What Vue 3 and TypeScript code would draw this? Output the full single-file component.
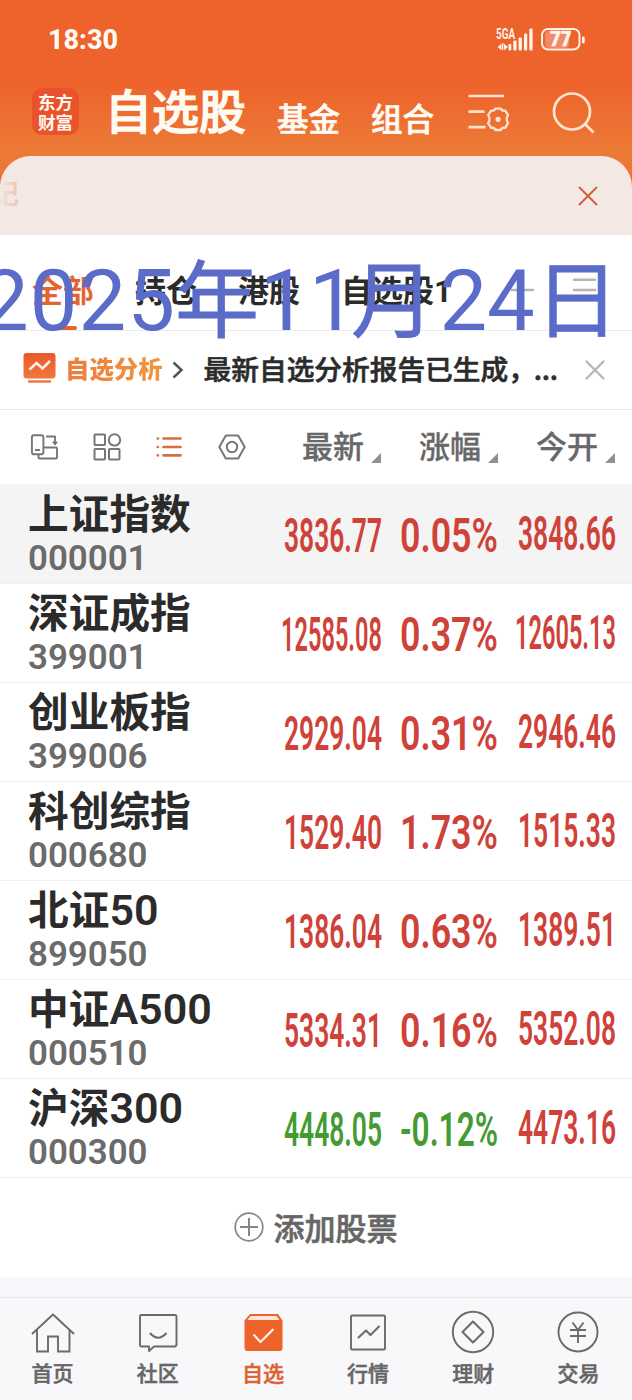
<script setup lang="ts">
import { h } from 'vue'

interface Quote {
  name: string
  latin: string
  code: string
  last: string
  change: string
  open: string
  down?: boolean
}

const quotes: Quote[] = [
  { name: '上证指数', latin: '', code: '000001', last: '3836.77', change: '0.05%', open: '3848.66' },
  { name: '深证成指', latin: '', code: '399001', last: '12585.08', change: '0.37%', open: '12605.13' },
  { name: '创业板指', latin: '', code: '399006', last: '2929.04', change: '0.31%', open: '2946.46' },
  { name: '科创综指', latin: '', code: '000680', last: '1529.40', change: '1.73%', open: '1515.33' },
  { name: '北证', latin: '50', code: '899050', last: '1386.04', change: '0.63%', open: '1389.51' },
  { name: '中证', latin: 'A500', code: '000510', last: '5334.31', change: '0.16%', open: '5352.08' },
  { name: '沪深', latin: '300', code: '000300', last: '4448.05', change: '-0.12%', open: '4473.16', down: true },
]

const tabs = ['全部', '持仓', '港股', '自选股1']
const columns = ['最新', '涨幅', '今开']
const nav = ['首页', '社区', '自选', '行情', '理财', '交易']

// Right-aligned figure condensed to a fixed width, so long prices keep their height.
const Figure = (p: { value: string; width: number; size: number }) =>
  h('svg', { width: p.width, height: p.size, class: 'figure' }, [
    h(
      'text',
      {
        x: 0,
        y: p.size * 0.855,
        'font-size': p.size,
        textLength: p.width,
        lengthAdjust: 'spacingAndGlyphs',
        fill: 'currentColor',
      },
      p.value,
    ),
  ])
Figure.props = ['value', 'width', 'size']

const priceWidth = (v: string) => (v.length > 7 ? 101 : 98)
</script>

<template>
  <div class="screen">
    <header class="top">
      <div class="status">
        <Figure class="clock" value="18:30" :width="70" :size="27" />
        <svg class="signal" width="96" height="30" viewBox="0 0 96 30">
          <text x="1" y="14" font-size="15.500" font-weight="700" textLength="19" lengthAdjust="spacingAndGlyphs" fill="#fff3ea">5GA</text>
          <path d="M2.500 21.500l4-3.200v6.400zM13 21.500l-4-3.200v6.400z" fill="#fff3ea" transform="translate(0 .5)" />
          <path d="M7.700 18v7" stroke="#fff3ea" stroke-width="1.300" />
          <g fill="#fff3ea">
            <rect x="13.500" y="19" width="2.800" height="6.500" rx="1" />
            <rect x="18.300" y="15.500" width="3.300" height="10" rx="1" />
            <rect x="23.600" y="12.500" width="3.300" height="13" rx="1" />
            <rect x="29" y="8.500" width="3.200" height="17" rx="1" />
            <rect x="34.300" y="3.500" width="3.300" height="22" rx="1" />
          </g>
          <rect x="50" y="6" width="24" height="17" rx="4" fill="#f08a68" />
          <rect x="47" y="4" width="37.500" height="20.500" rx="6" fill="none" stroke="#fff0e6" stroke-width="2" />
          <rect x="87" y="11.500" width="2.700" height="7" rx="1.300" fill="#fff0e6" />
          <text x="55" y="21.300" font-size="20" font-weight="900" textLength="21.500" lengthAdjust="spacingAndGlyphs" fill="#fff6ef" stroke="#fff6ef" stroke-width=".5">77</text>
        </svg>
      </div>
      <div class="titlebar">
        <div class="logo"><span>东方</span><span>财富</span></div>
        <h1>自选股</h1>
        <span class="link">基金</span>
        <span class="link second">组合</span>
        <svg class="manage" width="44" height="40" viewBox="0 0 44 40" fill="none" stroke="#ffe3cf" stroke-width="2.700">
          <path d="M1.500 4H37M1.500 19.600H17.500M1.500 35.200H18.500" />
          <path d="M24.200 18.600C26.500 19 28 18 28.200 16.600H34C34.500 18.200 36 19 38.200 18.600L41.100 23.100C39.300 25.200 39.300 29 41.100 31.200L38.200 35.900C36 35.400 34.500 36.300 34 38H28.200C27.700 36.300 26.200 35.400 24.200 35.900L21.100 31.200C23 29 23 25.200 21.100 23.100Z" stroke-width="2.300" stroke-linejoin="round" />
          <circle cx="31.100" cy="27.300" r="2.600" fill="#ffe3cf" stroke="none" />
        </svg>
        <svg class="search" width="44" height="44" viewBox="0 0 44 44" fill="none" stroke="#ffe3cf" stroke-width="2.700">
          <circle cx="20" cy="19.500" r="18" />
          <path d="M32.500 31.500l9 9" />
        </svg>
      </div>
    </header>

    <section class="notice">
      <span class="ticker">记</span>
      <svg width="20" height="20" viewBox="0 0 20 20" stroke="#cf6136" stroke-width="1.900" stroke-linecap="round"><path d="M1.500 1.500l17 17M18.500 1.500l-17 17" /></svg>
    </section>

    <section class="tabs">
      <span v-for="(t, i) in tabs" :key="t" class="tab" :class="{ active: i === 0 }">{{ t }}</span>
      <svg class="tools" width="90" height="24" viewBox="0 0 90 24" stroke="#b4b4b8" stroke-width="2.600" stroke-linecap="round">
        <path d="M1 13H22M63 2.800H84M63 13H84" />
      </svg>
      <svg class="datemark" width="632" height="90" viewBox="0 0 632 90">
        <text y="75">
          <tspan x="-19" textLength="194">2025</tspan><tspan class="han" x="175" y="76">年</tspan><tspan x="260 309" y="75">11</tspan><tspan class="han" x="351" y="76">月</tspan><tspan x="439.500 487" y="75">24</tspan><tspan class="han" x="535" y="76">日</tspan>
        </text>
      </svg>
    </section>

    <section class="analysis">
      <svg class="chart" width="33" height="31" viewBox="0 0 33 31">
        <defs>
          <linearGradient id="chartFill" x1="0" y1="0" x2="0" y2="1"><stop offset="0" stop-color="#ea572b" /><stop offset="1" stop-color="#f0793d" /></linearGradient>
        </defs>
        <rect x=".5" y="0" width="32" height="25.500" rx="3" fill="url(#chartFill)" />
        <path d="M6.500 16.500l7-6.500 6 5.500 7.500-7.500" fill="none" stroke="#fff0e4" stroke-width="2.500" />
        <path d="M6 28.500h21" stroke="#ec7a45" stroke-width="2.500" stroke-linecap="round" />
      </svg>
      <b>自选分析</b>
      <svg class="chevron" width="12" height="18" viewBox="0 0 12 18" fill="none" stroke="#555" stroke-width="2.500"><path d="M1.500 1.500L9.500 9l-8 7.500" /></svg>
      <p>最新自选分析报告已生成，<i>...</i></p>
      <svg class="dismiss" width="20" height="20" viewBox="0 0 20 20" stroke="#b7b7b7" stroke-width="2.400" stroke-linecap="round"><path d="M1.500 1.500l17 17M18.500 1.500l-17 17" /></svg>
    </section>

    <section class="colhead">
      <div class="views">
        <svg width="28" height="28" viewBox="0 0 28 28" fill="none" stroke="#777" stroke-width="1.900" stroke-linejoin="round">
          <rect x="1.900" y="2.300" width="11.500" height="19" rx="2" />
          <path d="M5 17h5M8.500 21.500V24.500q0 1 1 1H26q1 0 1-1V15.500q0-1-1-1H13.500M16 3.500H25V11" />
          <path d="M22.700 9l2.300 3 2.300-3z" fill="#777" stroke-width="1" />
        </svg>
        <svg width="28" height="28" viewBox="0 0 28 28" fill="none" stroke="#777" stroke-width="2">
          <rect x="1.500" y="1.500" width="10.500" height="10.500" rx=".7" /><circle cx="21.500" cy="6.900" r="5.700" />
          <rect x="1.500" y="16" width="10.500" height="10.500" rx=".7" /><rect x="16" y="16" width="10.500" height="10.500" rx=".7" />
        </svg>
        <svg width="28" height="28" viewBox="0 0 28 28" stroke="#dc6b40" stroke-width="2.700" stroke-linecap="round">
          <path d="M2.800 5.500h.1M2.800 14h.1M2.800 22.300h.1M8.500 5.500H25.500M8.500 14H25.500M8.500 22.300H25.500" />
        </svg>
        <svg width="28" height="28" viewBox="0 0 28 28" fill="none" stroke="#777" stroke-width="2">
          <path d="M7.800 2.400h12.400L26.700 14l-6.500 11.600H7.800L1.300 14z" stroke-linejoin="round" /><circle cx="14" cy="14" r="5.200" />
        </svg>
      </div>
      <div v-for="c in columns" :key="c" class="col">
        <span>{{ c }}</span>
        <svg width="10" height="10" viewBox="0 0 10 10"><path d="M10 0v10H0z" fill="#909090" /></svg>
      </div>
    </section>

    <main>
      <article v-for="(q, i) in quotes" :key="q.code" class="row" :class="{ pinned: i === 0 }">
        <div class="ident">
          <h2>{{ q.name }}<em v-if="q.latin">{{ q.latin }}</em></h2>
          <Figure class="code" :value="q.code" :width="119.500" :size="35.500" />
        </div>
        <div class="num" :class="{ down: q.down }"><Figure :value="q.last" :width="priceWidth(q.last)" :size="47.500" /></div>
        <div class="num" :class="{ down: q.down }"><Figure :value="q.change" :width="98" :size="47.500" /></div>
        <div class="num open"><Figure :value="q.open" :width="priceWidth(q.open)" :size="47.500" /></div>
      </article>
    </main>

    <div class="add">
      <svg width="30" height="30" viewBox="0 0 30 30" fill="none" stroke="#858585" stroke-width="1.700"><circle cx="15" cy="15" r="13.800" /><path d="M6 15h18M15 6v18" stroke-width="2" /></svg>
      <span>添加股票</span>
    </div>
    <div class="spacer"></div>

    <nav>
      <div v-for="(n, i) in nav" :key="n" class="item" :class="{ on: i === 2 }">
        <svg width="44" height="44" viewBox="0 0 44 44" fill="none" stroke="#6b6b6b" stroke-width="1.900" stroke-linejoin="round">
          <template v-if="i === 0">
            <path d="M1 23L22 3.500 43 23" />
            <path d="M6 19V40.500H17V25.500H27V40.500H38.500V19" stroke-linejoin="miter" />
          </template>
          <template v-else-if="i === 1">
            <path d="M5 4H39Q40.500 4 40.500 6V33Q40.500 35.500 38.500 35.500H18L13 40V35.500H5.500Q4 35.500 4 33.500V5.500Q4 4 5 4Z" />
            <path d="M14 22Q22 31.500 30.500 22" stroke-width="2.100" />
          </template>
          <template v-else-if="i === 2">
            <path d="M9 3H37L41.500 9.500V37Q41.500 40 38.500 40H6.500Q3.500 40 3.500 37V9.500Z" fill="#ee632a" stroke="none" />
            <path d="M9.500 5H35.500L38.500 9H6.500Z" fill="#fce5da" stroke="none" />
            <path d="M12.500 23.500L19.500 31 32.500 18" stroke="#fff0e8" stroke-width="2.200" />
          </template>
          <template v-else-if="i === 3">
            <rect x="5" y="4.500" width="34" height="34" rx="1" />
            <path d="M12 27L20 19.500 24.500 24 33.500 15" stroke-width="2.100" />
          </template>
          <template v-else-if="i === 4">
            <circle cx="22" cy="21" r="20.200" />
            <path d="M22 10.500L32.500 21 22 31.500 11.500 21Z" stroke-width="2.100" />
          </template>
          <template v-else>
            <circle cx="22" cy="21" r="19.500" />
            <path d="M16.500 11.500L22 19 27.500 11.500M22 19V32M14 19H30M14 25H30" />
          </template>
        </svg>
        <span>{{ n }}</span>
      </div>
    </nav>
  </div>
</template>

<style>
body {
  background: #fff;
}
</style>

<style scoped>
.screen {
  width: 632px;
  height: 1400px;
  overflow: hidden;
  display: flex;
  flex-direction: column;
  background: linear-gradient(#ee622b 0, #ee622b 78px, #ec7936 150px, #ec7534 200px, #fff 201px);
  font-family: 'Noto Sans CJK SC', sans-serif;
  line-height: 1;
  color: #2b2b2b;
}
svg { display: block; flex: none; overflow: visible; }
.figure, .signal { font-family: Roboto, sans-serif; font-weight: 600; }
span, b, p, h1, h2 { white-space: nowrap; }
.top { height: 156px; flex: none; color: #fffaf2; }
.status { display: flex; justify-content: space-between; padding: 26px 41px 0 48px; height: 54px; box-sizing: border-box; }
.clock { font-weight: 800; }
.signal { margin-top: -1px; }
.titlebar { display: flex; height: 102px; padding-left: 32px; }
.logo {
  width: 47px;
  height: 47px;
  margin-top: 34px;
  border-radius: 10px;
  background: #ea522b;
  display: flex;
  flex-direction: column;
  align-items: center;
  justify-content: center;
  font-size: 17.500px;
  font-weight: 700;
  line-height: 20px;
}
h1 { margin: 31px 0 0 26px; font-size: 47px; font-weight: 500; line-height: 48px; -webkit-text-stroke: 1.200px currentColor; }
.link { margin: 46px 0 0 31px; font-size: 31.500px; font-weight: 500; line-height: 34px; -webkit-text-stroke: .7px currentColor; }
.second { margin-left: 31px; }
.manage { margin: 38px 0 0 33px; }
.search { margin: 38px 0 0 41px; }
.notice {
  height: 79px;
  flex: none;
  box-sizing: border-box;
  border-radius: 31px 31px 0 0;
  background: #f3e8e3;
  display: flex;
  justify-content: space-between;
  align-items: center;
  padding: 0 34px 0 0;
}
.ticker {
  margin: -6px 0 0 -8px;
  font-size: 27px;
  font-weight: 700;
  line-height: 34px;
  background: linear-gradient(90deg, #f1e2da 35%, #ecc4ae 100%);
  background-clip: text;
  color: transparent;
}
.notice svg { margin-top: 1px; }
.tabs {
  position: relative;
  height: 96px;
  flex: none;
  box-sizing: border-box;
  border-bottom: 1px solid #ebebee;
  background: #fff;
  display: flex;
  gap: 41px;
  padding: 41px 0 0 32px;
}
.tab { position: relative; font-size: 31px; font-weight: 700; line-height: 31px; font-family: Roboto, 'Noto Sans CJK SC', sans-serif; }
.active { color: #e4642f; }
.active::after {
  content: '';
  position: absolute;
  left: 21px;
  top: 50px;
  width: 24px;
  height: 4px;
  border-radius: 2px;
  background: #e4642f;
}
.tools { margin-left: 18px; margin-top: 1px; }
.datemark { position: absolute; left: 0; top: 20px; z-index: 2; }
.datemark text { font-family: Roboto, sans-serif; font-size: 85px; fill: #5a6bc8; }
.datemark .han { font-family: 'Noto Sans CJK SC', sans-serif; font-size: 84px; stroke: #5a6bc8; stroke-width: .8px; }
.analysis {
  height: 79px;
  flex: none;
  box-sizing: border-box;
  border-bottom: 1px solid #ebebeb;
  background: #fff;
  display: flex;
  align-items: center;
  padding-left: 23px;
}
.chart { margin-top: -4px; }
.analysis b {
  margin: -5px 0 0 9px;
  font-size: 24.400px;
  font-weight: 900;
  line-height: 32px;
  background: linear-gradient(90deg, #ee7c3e, #ef963e);
  background-clip: text;
  color: transparent;
}
.chevron { margin-left: 9px; }
.analysis p {
  margin: -3px 0 0 20px;
  width: 354px;
  font-size: 27.700px;
  font-weight: 500;
  display: flex;
  -webkit-text-stroke: .6px currentColor;
}
.analysis i { font-style: normal; margin-left: -2px; letter-spacing: -.3px; }
.dismiss { margin-left: 27px; }
.colhead { height: 74px; flex: none; background: #fff; display: flex; align-items: center; }
.views { display: flex; gap: 34.500px; padding-left: 30px; width: 302px; box-sizing: border-box; flex: none; }
.col {
  width: 117px;
  flex: none;
  display: flex;
  align-items: center;
  color: #686868;
  font-size: 31px;
  font-weight: 500;
  -webkit-text-stroke: .3px currentColor;
}
.col span { margin-top: -5px; width: 69px; }
.col svg { margin-top: 22px; }
main { flex: none; }
.row {
  height: 99px;
  box-sizing: border-box;
  box-shadow: 0 1px 0 #efefef;
  display: flex;
  padding-left: 28px;
}
.pinned { background: #f4f4f4; }
.ident { width: 237px; flex: none; }
h2 { margin: 6px 0 0; font-size: 40.700px; font-weight: 700; line-height: 44px; height: 44px; }
h2 em { font: 600 43px/44px Roboto, sans-serif; }
.code { margin-top: 6px; color: #6b6b6b; font-weight: 600; }
.num { width: 116.500px; flex: none; display: flex; justify-content: flex-end; padding-top: 27px; color: #cf4239; }
.num:nth-child(3) { width: 116px; }
.open { padding-top: 25px; width: 118px; }
.down { color: #459b33; }
.add {
  height: 100px;
  flex: none;
  display: flex;
  align-items: center;
  justify-content: center;
  gap: 10px;
  padding-right: 1px;
  font-size: 31px;
  font-weight: 500;
  -webkit-text-stroke: .6px currentColor;
  color: #666;
}
.add span { margin-top: -2px; }
.spacer { height: 20px; flex: none; background: #f6f7fa; }
nav { height: 103px; flex: none; box-sizing: border-box; border-top: 1px solid #e9e9ec; background: #f8f8fb; display: flex; padding-right: 1px; }
.item {
  flex: 1;
  display: flex;
  flex-direction: column;
  align-items: center;
  padding-top: 13px;
  font-size: 21px;
  font-weight: 500;
  -webkit-text-stroke: .5px currentColor;
  color: #666;
}
.item span { margin-top: 6px; line-height: 22px; }
.on { color: #dc6231; }
</style>
